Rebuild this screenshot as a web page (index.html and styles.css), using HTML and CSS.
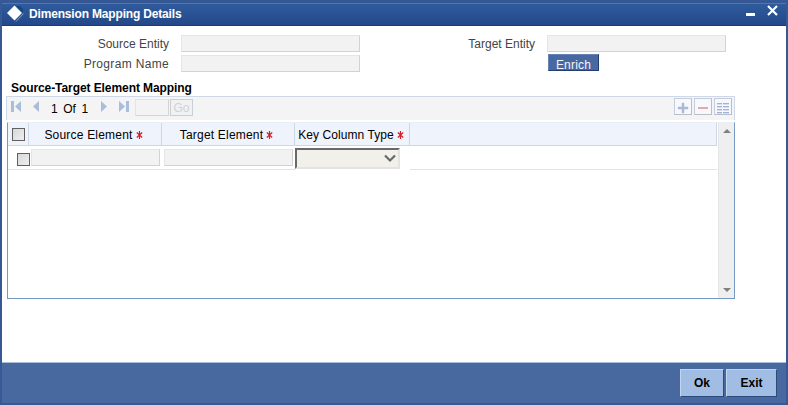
FILE: index.html
```
<!DOCTYPE html>
<html lang="en">
<head>
<meta charset="utf-8">
<title>Dimension Mapping Details</title>
<link rel="stylesheet" href="styles.css">
</head>
<body>
<div class="window">
  <header class="titlebar">
    <svg class="logo" width="18" height="18" viewBox="0 0 18 18"><path d="M9 1l7 7V4l-3-3z" fill="#0d4a83"/><path d="M9 16.500l7.500-8" stroke="#7fa3d2" fill="none"/><path d="M7.500 .5L15 8 7.500 15.500 0 8z" fill="#fff"/></svg>
    <h1>Dimension Mapping Details</h1>
    <svg class="controls" width="34" height="14" viewBox="0 0 34 14"><path d="M2 8h9v3H2z" fill="#fff"/><path d="M24 1l9 9M33 1l-9 9" stroke="#fff" stroke-width="2.200"/></svg>
  </header>
  <main>
    <section class="form">
      <label>Source Entity</label><div class="field"></div>
      <label>Target Entity</label><div class="field"></div>
      <label class="program">Program Name</label><div class="field"></div>
      <button class="enrich">Enrich</button>
    </section>
    <h2>Source-Target Element Mapping</h2>
    <div class="toolbar">
      <svg class="first" width="11" height="12" viewBox="0 0 11 12"><path d="M0 0h3v11H0zM10 0v11L4 5.500z"/></svg>
      <svg class="prev" width="6" height="12" viewBox="0 0 6 12"><path d="M6 0v11L0 5.500z"/></svg>
      <span class="count">1 Of 1</span>
      <svg class="next" width="6" height="12" viewBox="0 0 6 12"><path d="M0 0v11l6-5.500z"/></svg>
      <svg class="last" width="11" height="12" viewBox="0 0 11 12"><path d="M1 0v11l6-5.500zM8 0h3v11H8z"/></svg>
      <div class="page"></div>
      <button class="go">Go</button>
      <div class="tools">
        <span class="tool"><svg width="16" height="15" viewBox="0 0 16 15"><path d="M7 4h2v4h4v2H9v4H7v-4H3V8h4z" fill="#a9b9d8" stroke="#a9b9d8" stroke-width=".5"/></svg></span>
        <span class="tool"><svg width="16" height="15" viewBox="0 0 16 15"><path d="M3 8h10v2H3z" fill="#e0aaaa"/></svg></span>
        <span class="tool"><svg width="16" height="15" viewBox="0 0 16 15" shape-rendering="crispEdges"><path d="M2 4h5v1H2zM8 4h6v1H8zM2 7h5v1H2zM8 7h6v1H8zM2 10h5v1H2zM8 10h6v1H8zM2 13h5v1H2zM8 13h6v1H8z" fill="#9fb2d8"/><path d="M2 5h5v1H2zM8 5h6v1H8zM2 8h5v1H2zM8 8h6v1H8zM2 11h5v1H2zM8 11h6v1H8zM2 14h5v1H2zM8 14h6v1H8z" fill="#d5deee"/></svg></span>
      </div>
    </div>
    <div class="grid">
      <div class="rows">
        <div class="row head">
          <div class="cell"><i class="check"></i></div>
          <div class="cell named"><span>Source Element</span><svg class="req" width="7" height="8" viewBox="0 0 7 8"><path d="M3.500 0v8M.8 1.500l5.400 5M6.200 1.500l-5.400 5"/></svg></div>
          <div class="cell named"><span>Target Element</span><svg class="req" width="7" height="8" viewBox="0 0 7 8"><path d="M3.500 0v8M.8 1.500l5.400 5M6.200 1.500l-5.400 5"/></svg></div>
          <div class="cell key"><span>Key Column Type</span><svg class="req" width="7" height="8" viewBox="0 0 7 8"><path d="M3.500 0v8M.8 1.500l5.400 5M6.200 1.500l-5.400 5"/></svg></div>
          <div class="cell"></div>
        </div>
        <div class="row data">
          <div class="cell mark"><i class="check"></i></div>
          <div class="entry"><div class="field"></div></div>
          <div class="entry"><div class="field"></div></div>
          <div class="select"><svg width="13" height="9" viewBox="0 0 13 9"><path d="M1 1.500l5 5 5-5" fill="none" stroke="#696969" stroke-width="2.200"/></svg></div>
          <div class="cell rest"></div>
        </div>
      </div>
      <div class="scroll">
        <svg width="8" height="4" viewBox="0 0 8 4"><path d="M4 0l4 4H0z" fill="#808080"/></svg>
        <svg width="8" height="4" viewBox="0 0 8 4"><path d="M0 0h8L4 4z" fill="#808080"/></svg>
      </div>
    </div>
  </main>
  <footer><button class="ok">Ok</button><button class="exit">Exit</button></footer>
</div>
</body>
</html>
```
FILE: styles.css
```
* { box-sizing: border-box; }
body { margin: 0; font: 12px/14px "Liberation Sans", Arial, sans-serif; color: #000; }
button { padding: 0; font: inherit; }
svg { display: block; flex: none; }
.window { width: 788px; height: 405px; display: flex; flex-direction: column; border: 2px solid #365894; border-top-width: 3px; background: #fff; }
.titlebar { height: 23px; flex: none; display: flex; padding: 1px 8px 0 5px; background: linear-gradient(#2f5b9c, #24488a); border-top: 1px solid #4a78b4; border-bottom: 1px solid #1c3a75; }
h1 { margin: 2px auto 0 4px; font-size: 12px; line-height: 14px; letter-spacing: -.17px; color: #fff; white-space: nowrap; }
main { flex: 1; padding: 9px 0 0 4px; }
.form { display: grid; grid-template-columns: 163px 179px 163px 179px; grid-template-rows: 17px 17px; column-gap: 12px; row-gap: 3px; }
.form label { text-align: right; line-height: 18px; color: #444; white-space: nowrap; }
.form .program { letter-spacing: .33px; }
.field { height: 17px; background: #f2f2f2; border: 1px solid #e5e5e5; border-right-color: #d2d2d2; border-bottom-color: #d2d2d2; }
.enrich { grid-column: 4; width: 51px; height: 17px; margin: -1px 0 0 1px; padding-top: 3px; background: #4868a2; color: #f3f6fb; border: 1px solid #6584b5; border-right-color: #223d70; border-bottom-color: #223d70; line-height: 14px; letter-spacing: .2px; }
h2 { margin: 9px 0 0 5px; height: 15px; font-size: 12px; line-height: 14px; letter-spacing: -.08px; white-space: nowrap; }
.toolbar { width: 729px; height: 24px; display: flex; background: #f4f4f4; border: 1px solid #cfd8e8; border-bottom: 0; fill: #a9bddd; }
.first { margin: 4px 0 0 4px; }
.prev { margin: 4px 0 0 11px; }
.count { width: 50px; margin: 5px 0 0 12px; word-spacing: 2.200px; white-space: nowrap; }
.next { margin: 4px 0 0 0; }
.last { margin: 4px 0 0 11px; }
.page { width: 34px; height: 17px; margin: 2px 1px 0 6px; border: 1px solid #e4e4e4; border-right-color: #d4d4d4; border-bottom-color: #d4d4d4; background: #f3f3f3; }
.go { width: 23px; height: 17px; margin-top: 2px; background: #f0f1f3; border: 1px solid #c9cfd8; color: #d0d1d4; line-height: 17px; }
.tools { display: flex; gap: 2px; margin: 1px 2px 0 auto; }
.tool { width: 18px; height: 17px; background: #f7f8fb; border: 1px solid #c5cddb; border-right-color: #b9bec7; border-bottom-color: #b9bec7; }
.grid { width: 728px; height: 177px; display: flex; justify-content: space-between; margin: 2px 0 0 1px; border: 1px solid #7699c3; border-top-color: #e9eef6; }
.rows { width: 709px; }
.row { display: grid; grid-template-columns: 21px 133px 133px 115px 307px; }
.head { height: 23px; background: #eff3fc; border-bottom: 1px solid #ccd7e7; }
.head .cell { display: flex; align-items: center; justify-content: center; gap: 3px; padding-top: 1px; border-right: 1px solid #ccd7e7; white-space: nowrap; letter-spacing: .08px; }
.head .named { padding-right: 3px; letter-spacing: .2px; }
.head .key { padding-right: 2px; }
.req { stroke: #d32027; stroke-width: 1.200; fill: none; margin-top: 1px; }
.check { display: block; width: 13px; height: 13px; background: linear-gradient(135deg, #d8d8d8, #eee); border: 1px solid #606060; }
.data { height: 24px; grid-template-columns: 23px 133px 131px 115px 307px; }
.entry { padding-top: 3px; border-bottom: 1px solid #dce4f0; }
.entry .field { width: 129px; }
.mark { padding: 7px 0 0 9px; border-bottom: 1px solid #dce4f0; }
.data .select { width: 105px; height: 21px; margin-top: 2px; padding: 4px 0 0 87px; background: #f1f0eb; border: 2px solid #e3e3e1; border-top-color: #696969; border-left-color: #696969; }
.rest { border-bottom: 1px solid #dce4f0; }
.scroll { width: 16px; display: flex; flex-direction: column; justify-content: space-between; align-items: center; padding: 6px 0; background: #efefef; border-left: 1px solid #e5e5e5; }
footer { height: 41px; display: flex; justify-content: flex-end; gap: 2px; padding: 6px 9px 0 0; background: #4868a0; border-top: 1px solid #a9bddb; }
footer button { height: 28px; background: #a1bde3; border: 1px solid #c2d5ee; border-right-color: #2d4a7a; border-bottom-color: #2d4a7a; font-weight: bold; }
.ok { width: 44px; }
.exit { width: 51px; }
```
